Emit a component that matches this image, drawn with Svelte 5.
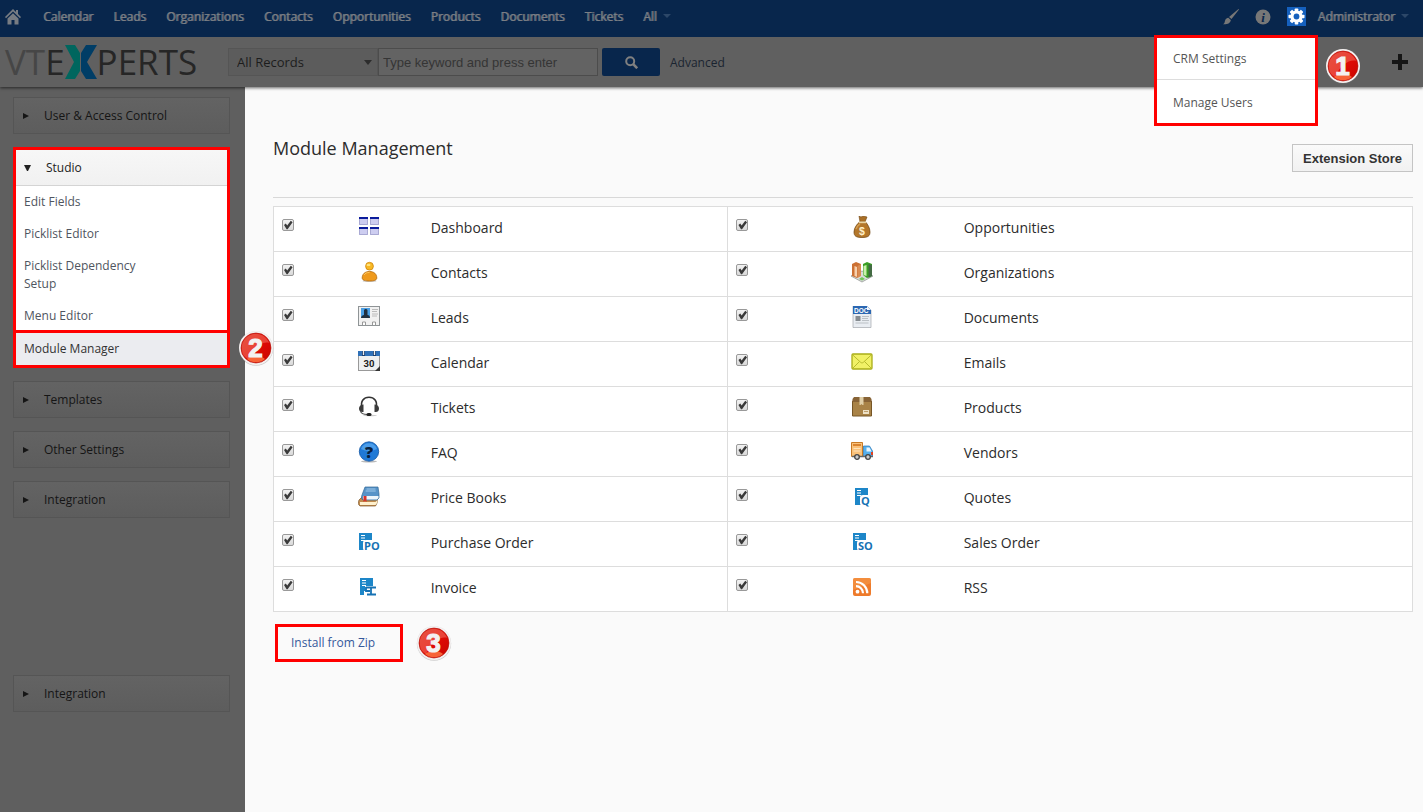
<script>
  const navItems = ['Calendar', 'Leads', 'Organizations', 'Contacts', 'Opportunities', 'Products', 'Documents', 'Tickets']
  const studioLinks = ['Edit Fields', 'Picklist Editor', 'Picklist Dependency Setup', 'Menu Editor']
  const closedPanels = ['Templates', 'Other Settings', 'Integration']

  let rows = $state([
    [{ name: 'Dashboard', on: true }, { name: 'Opportunities', on: true }],
    [{ name: 'Contacts', on: true }, { name: 'Organizations', on: true }],
    [{ name: 'Leads', on: true }, { name: 'Documents', on: true }],
    [{ name: 'Calendar', on: true }, { name: 'Emails', on: true }],
    [{ name: 'Tickets', on: true }, { name: 'Products', on: true }],
    [{ name: 'FAQ', on: true }, { name: 'Vendors', on: true }],
    [{ name: 'Price Books', on: true }, { name: 'Quotes', on: true }],
    [{ name: 'Purchase Order', on: true }, { name: 'Sales Order', on: true }],
    [{ name: 'Invoice', on: true }, { name: 'RSS', on: true }]
  ])

  // sheet of paper shared by the inventory modules
  const sheet = (x) => `<rect x="${x}" y="2" width="13" height="17" fill="#1d86c8"/><path d="M${x + 2} 4.500h4M${x + 2} 7h4M${x + 2} 9.500h4" stroke="#fff" stroke-width="1"/>`
  const letters = (x, t) => `<rect x="${x - 1}" y="9" width="16" height="11" rx="3" fill="#fff"/><text x="${x}" y="19" font-family="Open Sans, sans-serif" font-weight="700" font-size="11" fill="#1672b4">${t}</text>`

  const icons = {
    'Dashboard': `<g fill="#cdcdf0"><path d="M1 1h9v8H1zM12 1h9v8h-9zM1 11h9v8H1zM12 11h9v8h-9z"/></g><g fill="#0b1c9c"><path d="M1 1h9v2H1zM12 1h9v2h-9zM1 11h9v2H1zM12 11h9v2h-9z"/></g><path d="M1.500 3v5.500h8V3M12.500 3v5.500h8V3M1.500 13v5.500h8V13M12.500 13v5.500h8V13" fill="none" stroke="#9a9ac6" stroke-width=".7"/>`,
    'Contacts': `<ellipse cx="11.500" cy="20" rx="7" ry="1" fill="#ccc"/><path d="M4.200 17c0-4 2.800-6.500 7.300-6.500s7.300 2.500 7.300 6.500c0 2.200-3 3-7.300 3s-7.300-.8-7.300-3z" fill="#ef9a1c" stroke="#b26a0c" stroke-width=".8"/><circle cx="11.500" cy="5.200" r="3.900" fill="#f8b823" stroke="#cd8510" stroke-width=".8"/><ellipse cx="10.500" cy="3.900" rx="2" ry="1.200" fill="#ffe27a"/><path d="M6 14c1-2 3-2.500 5.500-2.500" stroke="#ffc65e" fill="none"/>`,
    'Leads': `<rect x=".5" y=".5" width="21" height="19" fill="#f1f1f1" stroke="#8f9496"/><rect x="3" y="2" width="9" height="10" fill="#4aa0e6"/><path d="M3 12c0-2 2-3 3-3V4.500c0-2 3.500-2 3.500 0V9c1.500 0 2.500 1 2.500 3z" fill="#203040"/><path d="M14 3.500h6M14 5.500h5M14 8h6M14 10h5" stroke="#bbb"/><path d="M4.500 19v-3h3v3M14.500 19v-3h3v3" fill="#fff" stroke="#999"/>`,
    'Calendar': `<rect x=".5" y="1" width="21" height="18.500" fill="#eef0f1" stroke="#999"/><path d="M0 0h22v5H0z" fill="#2e70b8"/><path d="M5.500 0v5M16.500 0v5" stroke="#173e70" stroke-width="3"/><path d="M5.500 0v4M16.500 0v4" stroke="#eee" stroke-width="1.300"/><text x="11" y="16" text-anchor="middle" font-family="Roboto, sans-serif" font-weight="700" font-size="9.500" fill="#222">30</text><path d="M22 15v5h-5z" fill="#333"/>`,
    'Tickets': `<ellipse cx="12" cy="19.500" rx="7" ry=".8" fill="#ccc"/><path d="M4 12C2 5 6 1.200 11 1.200S20 5 18 12" fill="none" stroke="#333" stroke-width="1.600"/><path d="M5.500 8.500v7.500C2 16.500 1 14.500 1 12.500s1.500-4 4.500-4zM16.500 8.500v7.500c3.500.5 4.500-1.500 4.500-3.500s-1.500-4-4.500-4z" fill="#3a3a3a"/><path d="M2.500 15c.5 3 3 3.500 7 3.500" fill="none" stroke="#555" stroke-width="1.200"/><rect x="8.500" y="17" width="5" height="3" rx="1.500" fill="#222"/>`,
    'FAQ': `<ellipse cx="11" cy="20.500" rx="8" ry=".9" fill="#bbb"/><circle cx="11" cy="10.500" r="9.700" fill="#1f79d6" stroke="#1256a4" stroke-width=".8"/><path d="M3 8a8.500 8.500 0 0 1 16 0c-5 2.500-11 2.500-16 0z" fill="#66b1f3" opacity=".65"/><text x="11" y="16.500" text-anchor="middle" font-family="Open Sans, sans-serif" font-weight="800" font-size="16" fill="#07203f">?</text>`,
    'Price Books': `<path d="M1 14l3-3h15.500v5l-2 4H2c-2-1-2-4-1-6z" fill="#c18c4d" stroke="#80582b" stroke-width=".7"/><path d="M2 16h15.500l2-2v2.500l-2 2.500H2z" fill="#fff1ce"/><path d="M4 9L7 1h13l1 7v4l-2 2H5c-2-1-1.500-4-1-5z" fill="#5793c8" stroke="#326896" stroke-width=".7"/><path d="M5 10h15.500v2L19 13.500H5z" fill="#eef5fb"/><path d="M8.500 3h9M7.700 5h10" stroke="#a1c9ea" stroke-width="1"/><path d="M5.500 10h3v6L7 15l-1.500 1z" fill="#d8332a"/>`,
    'Purchase Order': sheet(1) + letters(6, 'PO'),
    'Invoice': sheet(2) + `<path d="M7 10h12v4h-2v2h2v4H6v-5h2z" fill="#fff"/><path d="M8 11.500h10M8 11v4h4M13 11v8M9 18.500h9" fill="none" stroke="#1672b4" stroke-width="1.800"/>`,
    'Opportunities': `<path d="M8 0l2 1 2-1 4 1-2 5H9z" fill="#a96f27" stroke="#71430f" stroke-width=".6"/><path d="M8.500 6h6c2 2 4.500 6 4.500 10 0 4-2 5.500-8 5.500S3 20 3 16C3 12 6 8 8.500 6z" fill="#b3772b" stroke="#6e430f" stroke-width=".7"/><path d="M8 6.300h7" stroke="#e9d5a3" stroke-width="1.800"/><path d="M5 13c1-3 2-4 4-5" stroke="#d69e50" stroke-width="1.500" fill="none"/><text x="11" y="18.500" text-anchor="middle" font-family="Liberation Sans, sans-serif" font-weight="700" font-size="10.500" fill="#fff1c9">$</text>`,
    'Organizations': `<path d="M0 15l11-5 11 5-11 6z" fill="#d9dcda" stroke="#8c918e" stroke-width=".7"/><path d="M1 3l4-2 5 2v11l-4 3-5-2z" fill="#cc7134"/><path d="M3.500 5L6 6v10l-2.500-1z" fill="#f7d1ae"/><path d="M10 3L6.500 5v12l3.500-2z" fill="#d98b52"/><path d="M12 3l4-2 5 2v12l-5 2-4-3z" fill="#3a9f24"/><path d="M12.500 5l3-1v11l-3-1z" fill="#caf0ab"/><path d="M17.500 3l3.500 1v11l-3.500 2z" fill="#436b44"/><path d="M8 18l3-2 3 2-3 1.500z" fill="#70c659"/>`,
    'Documents': `<path d="M2 0h14l4 4v17.500H2z" fill="#e9edf2" stroke="#a3a8ae" stroke-width=".7"/><path d="M2 0h14l4 4v4H2z" fill="#2b67b2"/><path d="M16 0v4h4z" fill="#e8f1fb"/><text x="3" y="6.500" font-family="Liberation Sans, sans-serif" font-weight="700" font-size="6.500" fill="#fff">DOC</text><rect x="4.500" y="10" width="5" height="5" fill="#858b90"/><path d="M11 10.500h7M11 12.500h6M11 14.500h7M4.500 17h13" stroke="#bbc0c5" stroke-width="1"/>`,
    'Emails': `<rect x="1" y="3" width="20" height="15" rx="1" fill="#f1f166" stroke="#a9ad18" stroke-width="1.300"/><path d="M1.800 4l7.700 7.200c1 .9 2 .9 3 0L20.200 4M2 17l6.500-6.500M20 17l-6.500-6.500" fill="none" stroke="#b8bb2d" stroke-width="1"/>`,
    'Products': `<path d="M1.500 5h19v15h-19z" fill="#a98347" stroke="#765626"/><path d="M1.500 3L3 1h16l1.500 2v3h-19z" fill="#876336"/><path d="M8.500 1h4v8h-1l-1-1-1 1h-1z" fill="#e0cfa7"/><rect x="12" y="14" width="6" height="4" fill="#ede1c6"/><path d="M13 15.500h4" stroke="#a98347" stroke-width=".7"/>`,
    'Vendors': `<path d="M.5 1.500h11v14H.5z" fill="#fac27a" stroke="#c87a25"/><path d="M2 4h8" stroke="#db8430" stroke-width="2"/><path d="M2.500 7.500h7M2.500 10h7" stroke="#ffe4be"/><path d="M12.500 5h6l3 5v5.500h-9z" fill="#56b0ed" stroke="#2874b6" stroke-width=".7"/><path d="M15.500 6.500h3l2 4h-5z" fill="#e8f6ff"/><path d="M20 11h2v3h-2z" fill="#e04120"/><path d="M1 15.500h21" stroke="#666" stroke-width="1.500"/><circle cx="6" cy="16" r="2.300" fill="#ccc" stroke="#444" stroke-width="1.300"/><circle cx="17" cy="16" r="2.300" fill="#ccc" stroke="#444" stroke-width="1.300"/>`,
    'Quotes': sheet(4) + letters(10, 'Q'),
    'Sales Order': sheet(2) + letters(7, 'SO'),
    'RSS': `<rect x="2" y="2" width="18" height="18" rx="2" fill="#ee7b2b"/><path d="M2 4a2 2 0 0 1 2-2h14a2 2 0 0 1 2 2v3L2 14z" fill="#f69747" opacity=".65"/><circle cx="6.500" cy="15.700" r="1.900" fill="#fff"/><path d="M5 10.200a7 7 0 0 1 7 7M5 6a11.200 11.200 0 0 1 11.300 11.200" fill="none" stroke="#fff" stroke-width="2.200"/>`
  }
</script>

{#snippet badge(n)}
  <svg class="badge" viewBox="0 0 36 36" role="img" aria-label="Step {n}">
    <defs>
      <linearGradient id="red{n}" x1="0" y1="0" x2="1" y2="1">
        <stop offset="0" stop-color="#d92a1d" />
        <stop offset=".5" stop-color="#e00b05" />
        <stop offset="1" stop-color="#c80500" />
      </linearGradient>
    </defs>
    <circle cx="18" cy="18.500" r="17.200" fill="#777" opacity=".35" />
    <circle cx="18" cy="18" r="17" fill="#f4f0f0" />
    <circle cx="18" cy="18" r="15" fill="url(#red{n})" stroke="#b31108" stroke-width=".6" />
    <path d="M4 20A14 14 0 0 1 31 13C25 11 15 17 10 29 6 27 4 24 4 20z" fill="#f47a68" opacity=".5" />
    <path d="M9 29a14 14 0 0 0 18 0c-4-4-14-4-18 0z" fill="#ff7b45" opacity=".8" />
    <text x="17.500" y="27" text-anchor="middle" font-family="Liberation Sans, sans-serif" font-weight="700" font-size="26" fill="#f3f1f1" stroke="#f3f1f1" stroke-width="1.200">{n}</text>
  </svg>
{/snippet}

{#snippet panel(title)}
  <button class="panel"><span class="arrow"></span>{title}</button>
{/snippet}

<div class="page">
  <nav>
    <a class="home" href="#home" aria-label="Home">
      <svg width="16" height="16" viewBox="0 0 16 16" fill="#777c83"><path d="M8 0l3 3V1h2v4l3 3-1 1.200L8 2.500 1 9.200 0 8z" /><path d="M8 4.200l5.500 5.200V15.500h-4V11h-3v4.500h-4V9.400z" /></svg>
    </a>
    {#each navItems as item}
      <a href="#{item}">{item}</a>
    {/each}
    <a href="#all">All<span class="caret"></span></a>
    <div class="tools">
      <button aria-label="Theme">
        <svg width="16" height="16" viewBox="0 0 16 16" fill="#777"><path d="M15.500 0L16 .5 8.500 10 6 8zM5.300 8.800L7.800 11C7.500 14 5 15.500 0 15.300c2-1 1.500-2.300 2.300-4.300.6-1.400 1.700-2 3-2.200z" /></svg>
      </button>
      <button aria-label="Information">
        <svg width="16" height="16" viewBox="0 0 16 16"><circle cx="8" cy="8" r="7.500" fill="#777" /><text x="8" y="12.500" text-anchor="middle" font-family="Liberation Serif, serif" font-style="italic" font-weight="700" font-size="13" fill="#08264c">i</text></svg>
      </button>
      <button class="gear" aria-label="Settings">
        <svg width="17" height="17" viewBox="-8.500 -8.500 17 17">
          <g fill="#fff">
            {#each [0, 45, 90, 135] as angle}
              <rect x="-1.800" y="-8" width="3.600" height="16" rx=".8" transform="rotate({angle})" />
            {/each}
            <circle r="6" />
          </g>
          <circle r="2.900" fill="#1560bd" />
        </svg>
      </button>
      <a class="admin" href="#admin">Administrator<span class="caret"></span></a>
    </div>

    <div class="menu">
      <a href="#crm">CRM Settings</a>
      <a href="#users">Manage Users</a>
      <div class="menu-badge">{@render badge(1)}</div>
    </div>
  </nav>

  <header>
    <a class="logo" href="#home" aria-label="VTExperts">
      <span class="vt">VT</span><span>E</span>
      <svg width="32" height="34" viewBox="0 0 32 34"><path d="M0 0h10l5 8v18l-5 8H0l9-17z" fill="#00665e" /><path d="M32 0H21l-5 8v18l5 8h11L22 17z" fill="#003d66" /></svg>
      <span>PERTS</span>
    </a>
    <form class="search" onsubmit={(e) => e.preventDefault()}>
      <div class="pick">
        <select aria-label="Search in">
          <option>All Records</option>
        </select>
      </div>
      <input type="text" aria-label="Keyword" placeholder="Type keyword and press enter" />
      <button aria-label="Search">
        <svg width="13" height="13" viewBox="0 0 13 13" fill="none" stroke="#808080" stroke-width="2"><circle cx="5.200" cy="5.200" r="4" /><path d="M8.200 8.200l4 4" stroke-width="2.600" /></svg>
      </button>
      <a href="#advanced">Advanced</a>
    </form>
    <button class="add" aria-label="Quick create">
      <svg width="18" height="18" viewBox="0 0 18 18"><path d="M7 1h4v6h6v4h-6v6H7v-6H1V7h6z" fill="#161616" /></svg>
    </button>
  </header>

  <div class="body">
    <aside>
      {@render panel('User & Access Control')}
      <section class="studio">
        <button class="panel open"><span class="arrow"></span>Studio</button>
        <div class="links">
          {#each studioLinks as link}
            <a href="#{link}">{link}</a>
          {/each}
        </div>
        <a class="current" href="#modules">Module Manager</a>
        <div class="side-badge">{@render badge(2)}</div>
      </section>
      {#each closedPanels as title}
        {@render panel(title)}
      {/each}
      <div class="last">
        {@render panel('Integration')}
      </div>
    </aside>

    <main>
      <div class="title">
        <h1>Module Management</h1>
        <button>Extension Store</button>
      </div>
      <table>
        <colgroup>
          <col class="check" /><col class="icon" /><col class="name" />
          <col class="check2" /><col class="icon2" /><col />
        </colgroup>
        <tbody>
          {#each rows as row}
            <tr>
              {#each row as mod}
                <td class="tick"><input type="checkbox" aria-label={mod.name} bind:checked={mod.on} /></td>
                <td><svg width="22" height="22" viewBox="0 0 22 22">{@html icons[mod.name]}</svg></td>
                <td>{mod.name}</td>
              {/each}
            </tr>
          {/each}
        </tbody>
      </table>
      <div class="install">
        <a href="#zip">Install from Zip</a>
        {@render badge(3)}
      </div>
    </main>
  </div>
</div>

<style>
  :global(body) {
    margin: 0;
    background: #5f5f5f;
  }

  .page {
    min-height: 100vh;
    display: flex;
    flex-direction: column;
    font-family: 'Open Sans', sans-serif;
    font-size: 12px;
    color: #333;
  }

  .page :global(*) {
    box-sizing: border-box;
  }

  a {
    color: inherit;
    text-decoration: none;
  }

  button {
    font: inherit;
    color: inherit;
    border: 0;
    padding: 0;
    background: none;
    cursor: pointer;
  }

  svg {
    display: block;
    flex: none;
  }

  nav {
    position: relative;
    z-index: 2;
    display: flex;
    align-items: center;
    gap: 20px;
    height: 37px;
    padding: 0 14px 4px 5px;
    background: #08264c;
    color: #7b7f85;
    text-shadow: 1px 0 #6a7079;
  }

  .home {
    margin-right: 2px;
  }

  .caret {
    display: inline-block;
    margin: 0 0 3px 6px;
    border: 4px solid transparent;
    border-top-color: #2c4768;
    border-bottom: 0;
  }

  .tools {
    display: flex;
    align-items: center;
    gap: 16px;
    margin-left: auto;
  }

  .gear {
    padding: 1px;
    background: #1560bd;
  }

  .admin {
    margin-left: -4px;
  }

  .menu {
    position: absolute;
    top: 35px;
    right: 105px;
    width: 164px;
    border: 3px solid #f00;
    background: #fff;
    color: #555;
    text-shadow: none;
  }

  .menu a {
    display: block;
    padding: 0 16px;
    line-height: 41px;
  }

  .menu a + a {
    border-top: 1px solid #ddd;
  }

  .menu a + a {
    padding-top: 2px;
  }

  .menu-badge,
  .side-badge {
    position: absolute;
  }

  .menu-badge {
    left: 168px;
    top: 10px;
  }

  .badge {
    width: 36px;
    height: 36px;
  }

  header {
    position: relative;
    z-index: 1;
    display: flex;
    align-items: center;
    height: 50px;
    padding: 0 14px 0 5px;
    background: #606060;
    box-shadow: 0 1px 3px rgba(0, 0, 0, 0.6);
  }

  .logo {
    display: flex;
    align-items: center;
    width: 223px;
    font-size: 35px;
    line-height: 34px;
    color: #262626;
  }

  .logo .vt {
    color: #464646;
  }

  .search {
    display: flex;
    align-items: center;
    font-size: 13px;
  }

  .pick {
    position: relative;
  }

  .pick::after {
    content: '';
    position: absolute;
    right: 6px;
    top: 12px;
    border: 4px solid transparent;
    border-top: 5px solid #2c2c2c;
    border-bottom: 0;
    pointer-events: none;
  }

  select {
    appearance: none;
    width: 150px;
    height: 28px;
    padding: 0 8px;
    border: 1px solid #555;
    border-radius: 0;
    background: #5c5c5c;
    font: inherit;
    color: #1c1c1c;
  }

  input[type='text'] {
    width: 220px;
    height: 28px;
    padding: 0 4px;
    border: 1px solid #4c4c4c;
    background: #636363;
    font: 13px 'Liberation Sans', Arial, sans-serif;
  }

  input::placeholder {
    color: #353535;
  }

  .search button {
    display: flex;
    align-items: center;
    justify-content: center;
    width: 58px;
    height: 28px;
    margin: 0 10px 0 4px;
    border-radius: 2px;
    background: #08264c;
  }

  .search a {
    font-size: 12px;
    color: #1a2430;
  }

  .add {
    margin-left: auto;
  }

  .body {
    display: flex;
    flex: 1;
  }

  aside {
    display: flex;
    flex-direction: column;
    gap: 13px;
    flex: none;
    width: 245px;
    padding: 10px 15px 10px 13px;
    background: #5f5f5f;
  }

  .panel {
    display: flex;
    align-items: center;
    width: 100%;
    height: 37px;
    padding-left: 9px;
    border: 1px solid #555;
    background: linear-gradient(#636363, #5d5d5d);
    color: #151515;
    text-align: left;
  }

  .arrow {
    width: 6px;
    margin-right: 15px;
    border: 3px solid transparent;
    border-left: 6px solid #151515;
    border-right: 0;
  }

  .studio {
    position: relative;
    border: 3px solid #f00;
    background: #fff;
  }

  .open {
    height: 36px;
    padding-left: 8px;
    border-width: 0 0 1px;
    border-color: #d4d4d4;
    background: linear-gradient(#f7f7f7, #f1f1f1);
    color: #222;
  }

  .open .arrow {
    width: 7px;
    border: 3px solid transparent;
    border-top: 6px solid #222;
    border-bottom: 0;
  }

  .links {
    height: 144px;
  }

  .links a,
  .current {
    display: block;
    padding: 7px 80px 7px 8px;
    line-height: 18px;
  }

  .links a {
    color: #4f5560;
  }

  .current {
    padding-right: 8px;
    border-top: 3px solid #f00;
    background: #ebecf0;
    color: #333;
  }

  .side-badge {
    right: -47px;
    bottom: -1px;
  }

  .last {
    padding-top: 144px;
  }

  main {
    flex: 1;
    min-width: 0;
    padding: 46px 10px 20px 28px;
    background: #fafafa;
  }

  .title {
    display: flex;
    align-items: flex-start;
    justify-content: space-between;
    height: 65px;
    border-bottom: 1px solid #d8d8d8;
    margin-bottom: 8px;
  }

  h1 {
    margin: 0;
    font-size: 18px;
    font-weight: 400;
    line-height: 30px;
    color: #2c2c2c;
  }

  .title button {
    margin-top: 11px;
    padding: 0 10px;
    height: 28px;
    border: 1px solid #c4c4c4;
    background: linear-gradient(#fafafa, #f1f1f1);
    font: bold 13px 'Liberation Sans', Arial, sans-serif;
    color: #333;
  }

  table {
    width: 100%;
    table-layout: fixed;
    border-collapse: collapse;
    border: 1px solid #ddd;
    background: #fff;
    font-size: 14px;
    color: #2c2c2c;
  }

  .check {
    width: 7.400%;
  }

  .icon {
    width: 6.400%;
  }

  .name {
    width: 26.100%;
  }

  .check2 {
    width: 10.800%;
  }

  .icon2 {
    width: 9.900%;
  }

  td {
    height: 45px;
    padding: 0 0 4px;
    border-bottom: 1px solid #ddd;
  }

  .tick {
    border-left: 1px solid #ddd;
    padding: 12px 0 0 8px;
    vertical-align: top;
  }

  input[type='checkbox'] {
    appearance: none;
    display: block;
    width: 12px;
    height: 12px;
    margin: 0;
    border: 1px solid #999;
    border-radius: 2px;
    background: linear-gradient(#f2f2f2, #d9d9d9);
  }

  input[type='checkbox']:checked::after {
    content: '';
    display: block;
    height: 10px;
    background: #3a3a3a;
    clip-path: polygon(10% 50%, 28% 36%, 42% 55%, 78% 8%, 96% 22%, 46% 92%, 36% 92%);
  }

  .install {
    display: flex;
    align-items: center;
    gap: 13px;
    margin: 12px 0 0 2px;
  }

  .install a {
    width: 128px;
    padding: 0 13px;
    border: 3px solid #f00;
    line-height: 32px;
    color: #35589a;
  }
</style>
